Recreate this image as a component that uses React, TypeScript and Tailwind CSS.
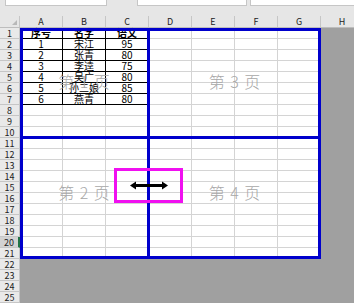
import React from 'react';

const cols = ['A', 'B', 'C', 'D', 'E', 'F', 'G'];

const data: string[][] = [
  ['序号', '名字', '语文'],
  ['1', '宋江', '95'],
  ['2', '张青', '80'],
  ['3', '李逵', '75'],
  ['4', '吴广', '80'],
  ['5', '孙二娘', '85'],
  ['6', '燕青', '80'],
];

const font = { fontFamily: '"Noto Sans CJK SC", "Liberation Sans", sans-serif' };

const Watermark: React.FC<{ n: number }> = ({ n }) => (
  <div className="flex items-center justify-center text-[16px] leading-none font-light text-[#a8a8a8] tracking-[1px]">
    第 {n} 页
  </div>
);

export default function App() {
  const rows = Array.from({ length: 25 }, (_, i) => i + 1);

  return (
    <div className="w-[354px] h-[303px] overflow-hidden bg-[#a0a0a0] text-[#222]" style={font}>
      {/* formula bar strip */}
      <div className="h-[16px] bg-[#e6e6e6] flex items-start">
        <div className="ml-[5px] w-[102px] h-[6px] bg-white border-x border-b border-[#c6c6c6]" />
        <div className="ml-[30px] w-[110px] h-[6px] bg-white border-x border-b border-[#c6c6c6]" />
        <div className="ml-[3px] flex-1 h-[6px] bg-white border-l border-b border-[#c6c6c6]" />
      </div>

      {/* column headers */}
      <div className="h-[12px] flex bg-[#e6e6e6] border-b border-[#bdbdbd]">
        <div className="w-[20px] shrink-0 relative border-r border-[#c6c6c6]">
          <div className="absolute right-[2px] bottom-[2px] w-0 h-0 border-l-[5px] border-l-transparent border-b-[5px] border-b-[#b8b8b8]" />
        </div>
        {[...cols, 'H'].map((c) => (
          <div
            key={c}
            className="w-[43px] shrink-0 border-r border-[#c6c6c6] flex items-end justify-center text-[9px] leading-[11px]"
          >
            {c}
          </div>
        ))}
      </div>

      <div className="flex">
        {/* row headers */}
        <div className="w-[20px] shrink-0">
          {rows.map((r) => (
            <div
              key={r}
              className={
                r === 20
                  ? 'h-[11px] bg-[#d2d2d2] border-b border-r-2 border-b-[#c6c6c6] border-r-[#217346] flex items-center justify-center text-[9px] leading-none'
                  : 'h-[11px] bg-[#e9e9e9] border-b border-r border-[#c6c6c6] flex items-center justify-center text-[9px] leading-none'
              }
            >
              {r}
            </div>
          ))}
        </div>

        {/* print area */}
        <div className="relative w-[301px] h-[231px] shrink-0 bg-white">
          {rows.slice(0, 21).map((r) => (
            <div key={r} className="flex h-[11px]">
              {cols.map((c, ci) => {
                const inTable = r <= 7 && ci < 3;
                const text = inTable ? data[r - 1][ci] : '';
                return (
                  <div
                    key={c}
                    className={
                      inTable
                        ? `w-[43px] shrink-0 border-r border-b border-black flex items-center justify-center text-[10px] leading-none text-black ${r === 1 ? 'font-bold' : ''}`
                        : 'w-[43px] shrink-0 border-r border-b border-[#d4d4d4]'
                    }
                  >
                    {text}
                  </div>
                );
              })}
            </div>
          ))}

          {/* page number watermarks */}
          <div className="absolute inset-0 grid grid-cols-[129px_172px] grid-rows-[106px_116px] pointer-events-none">
            <Watermark n={1} />
            <Watermark n={3} />
            <Watermark n={2} />
            <Watermark n={4} />
          </div>

          {/* page breaks */}
          <div className="absolute inset-0 border-[3px] border-[#0000cc]" />
          <div className="absolute top-0 bottom-0 left-[127px] w-[3px] bg-[#0000cc]" />
          <div className="absolute left-0 right-0 top-[108px] h-[3px] bg-[#0000cc]" />

          {/* drag highlight */}
          <div className="absolute left-[94px] top-[140px] w-[69px] h-[35px] border-[3px] border-[#f010f0] flex items-center justify-center">
            <svg width="38" height="9" viewBox="0 0 38 9">
              <line x1="5" y1="4.5" x2="33" y2="4.5" stroke="#000" strokeWidth="3" />
              <path d="M0 4.5 L6 0.5 L6 8.5 Z" fill="#000" />
              <path d="M38 4.5 L32 0.5 L32 8.5 Z" fill="#000" />
            </svg>
          </div>
        </div>
      </div>
    </div>
  );
}
